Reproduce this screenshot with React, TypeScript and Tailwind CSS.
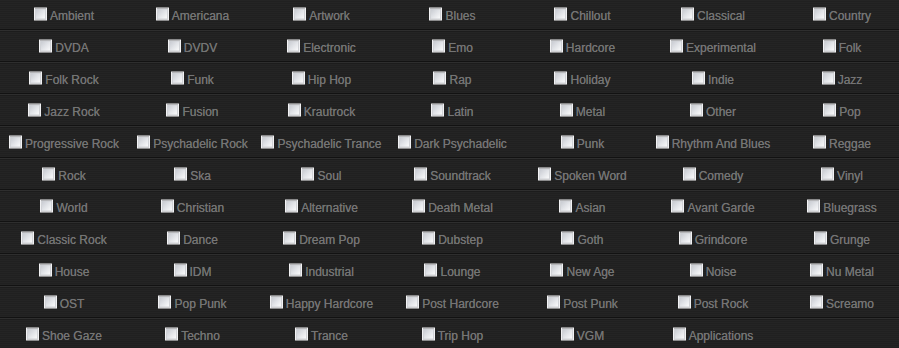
import React from "react";

const rows: string[][] = [
  ["Ambient", "Americana", "Artwork", "Blues", "Chillout", "Classical", "Country"],
  ["DVDA", "DVDV", "Electronic", "Emo", "Hardcore", "Experimental", "Folk"],
  ["Folk Rock", "Funk", "Hip Hop", "Rap", "Holiday", "Indie", "Jazz"],
  ["Jazz Rock", "Fusion", "Krautrock", "Latin", "Metal", "Other", "Pop"],
  ["Progressive Rock", "Psychadelic Rock", "Psychadelic Trance", "Dark Psychadelic", "Punk", "Rhythm And Blues", "Reggae"],
  ["Rock", "Ska", "Soul", "Soundtrack", "Spoken Word", "Comedy", "Vinyl"],
  ["World", "Christian", "Alternative", "Death Metal", "Asian", "Avant Garde", "Bluegrass"],
  ["Classic Rock", "Dance", "Dream Pop", "Dubstep", "Goth", "Grindcore", "Grunge"],
  ["House", "IDM", "Industrial", "Lounge", "New Age", "Noise", "Nu Metal"],
  ["OST", "Pop Punk", "Happy Hardcore", "Post Hardcore", "Post Punk", "Post Rock", "Screamo"],
  ["Shoe Gaze", "Techno", "Trance", "Trip Hop", "VGM", "Applications", ""],
];

function Box() {
  return (
    <span className="inline-block w-[13px] h-[13px] shrink-0 border border-[#f2f2f4] bg-[linear-gradient(135deg,#c2c5cc_0%,#e2e4e8_50%,#ffffff_100%)] shadow-[inset_0_0_0_1px_#d0d2d6] -translate-y-[1.5px]" />
  );
}

export default function App() {
  return (
    <div
      className="w-[899px] h-[348px] overflow-hidden bg-[#212121] bg-[image:repeating-linear-gradient(0deg,#202020_0px,#202020_1px,#242424_1px,#242424_2px)]"
      style={{ fontFamily: '"Liberation Sans", Arial, sans-serif' }}
    >
      <div className="w-[904px]">
        {rows.map((row, i) => (
          <div key={i} className="flex flex-col">
            <div className="grid grid-cols-[128px_129px_129px_133px_127px_134px_124px] h-[29px] pt-[2px]">
              {row.map((g, j) => (
                <div key={j} className="flex items-center justify-center">
                  {g && (
                    <label className="flex items-center gap-[3px] text-[12px] text-[#747474] whitespace-nowrap [text-shadow:0_0_0.4px_#747474]">
                      <Box />
                      <span>{g}</span>
                    </label>
                  )}
                </div>
              ))}
            </div>
            <div className="h-px bg-[#121212]" />
            <div className="h-px bg-[#2e2e2e]" />
            <div className="h-px bg-[#1c1c1c]" />
          </div>
        ))}
      </div>
    </div>
  );
}
